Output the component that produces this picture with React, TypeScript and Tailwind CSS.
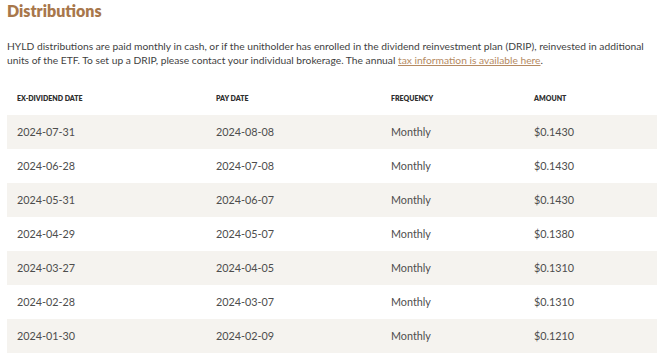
import React from 'react';

const rows = [
  ['2024-07-31', '2024-08-08', 'Monthly', '$0.1430'],
  ['2024-06-28', '2024-07-08', 'Monthly', '$0.1430'],
  ['2024-05-31', '2024-06-07', 'Monthly', '$0.1430'],
  ['2024-04-29', '2024-05-07', 'Monthly', '$0.1380'],
  ['2024-03-27', '2024-04-05', 'Monthly', '$0.1310'],
  ['2024-02-28', '2024-03-07', 'Monthly', '$0.1310'],
  ['2024-01-30', '2024-02-09', 'Monthly', '$0.1210'],
];

const cols = ['w-[199px]', 'w-[175px]', 'w-[143px]', 'flex-1'];

export default function App() {
  return (
    <div className="bg-white w-[663px] h-[355px] overflow-hidden px-[7px] font-['Lato',sans-serif] text-[#4d4d4d]">
      <h2 className="text-[16px] font-extrabold text-[#a8774b] leading-[22px]">Distributions</h2>
      <p className="mt-[17px] text-[10.25px] leading-[14px] text-[#3f3f3f] whitespace-nowrap">
        HYLD distributions are paid monthly in cash, or if the unitholder has enrolled in the dividend reinvestment plan (DRIP), reinvested in additional
        <br />
        units of the ETF. To set up a DRIP, please contact your individual brokerage. The annual{' '}
        <a className="text-[#b58a62] underline">tax information is available here</a>.
      </p>
      <div className="mt-[15px] w-[650px]">
        <div className="flex h-[33px] items-center text-[7px] font-extrabold uppercase text-[#2e2e2e]">
          {['Ex-Dividend Date', 'Pay Date', 'Frequency', 'Amount'].map((h, i) => (
            <div key={h} className={`${cols[i]} px-[10px]`}>{h}</div>
          ))}
        </div>
        {rows.map((r, i) => (
          <div key={i} className={`flex h-[34px] items-center text-[10.8px] ${i % 2 === 0 ? 'bg-[#f5f3ef]' : 'bg-white'}`}>
            {r.map((c, j) => (
              <div key={j} className={`${cols[j]} px-[10px]`}>{c}</div>
            ))}
          </div>
        ))}
      </div>
    </div>
  );
}
